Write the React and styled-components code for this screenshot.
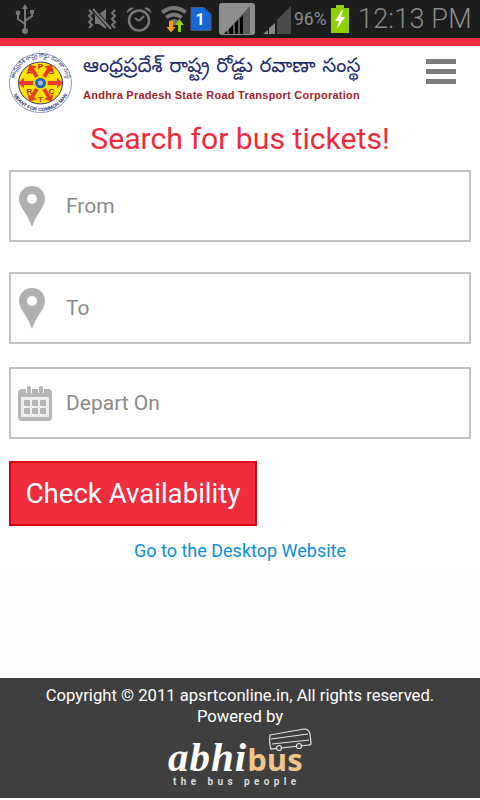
import * as React from 'react';
import styled, { createGlobalStyle } from 'styled-components';

const GlobalStyle = createGlobalStyle`
  html, body {
    margin: 0;
    padding: 0;
    background: #ffffff;
    font-family: Roboto, "Liberation Sans", sans-serif;
  }
  * { box-sizing: border-box; }
`;

// =====================================
// STATUS BAR
// =====================================

const Page = styled.div`
  width: 480px;
  height: 798px;
  display: flex;
  flex-direction: column;
  overflow: hidden;
`;

const StatusBar = styled.div`
  height: 38px;
  flex: none;
  background: #1d1d1d;
  display: flex;
  align-items: center;
  padding-left: 15px;
`;

const StatusIcon = styled.svg`
  flex: none;
  display: block;
  margin-left: ${(p) => p.$left || 0}px;
`;

const Percent = styled.span`
  margin-left: 3px;
  font-size: 17.5px;
  color: #8c8c8c;
  width: 37px;
`;

const Clock = styled.span`
  margin-left: 9px;
  font-size: 27px;
  font-weight: 300;
  color: #8c8c8c;
  white-space: nowrap;
  letter-spacing: 0.2px;
`;

const RedStripe = styled.div`
  height: 8px;
  flex: none;
  background: #ee2a3c;
`;

// =====================================
// HEADER
// =====================================

const Header = styled.header`
  height: 72px;
  flex: none;
  display: flex;
  align-items: flex-start;
  padding: 7px 24px 0 9px;
  background: #ffffff;
`;

const Brand = styled.div`
  flex: 1;
  display: flex;
  margin-left: 11px;
  flex-direction: column;
  padding-top: 2px;
`;

const TeluguName = styled.div`
  font-family: "Noto Sans Telugu", "Noto Sans", "DejaVu Sans", sans-serif;
  font-size: 20px;
  word-spacing: 1px;
  line-height: 28px;
  height: 33px;
  color: #1c2a6e;
  white-space: nowrap;
`;

const EnglishName = styled.div`
  font-family: "Liberation Sans", Arial, sans-serif;
  font-size: 11px;
  font-weight: 700;
  line-height: 14px;
  letter-spacing: 0.25px;
  color: #a3242c;
  white-space: nowrap;
`;

const Burger = styled.div`
  width: 30px;
  margin-top: 6px;
  display: flex;
  flex-direction: column;
  gap: 5px;
`;

const BurgerBar = styled.span`
  display: block;
  height: 5px;
  background: #7b7b7b;
`;

// =====================================
// FORM
// =====================================

const Main = styled.main`
  flex: 1;
  display: flex;
  flex-direction: column;
  padding: 0 9px;
  background: #ffffff;
`;

const Title = styled.h1`
  margin: 0;
  height: 52px;
  padding-top: 3px;
  font-size: 30.2px;
  line-height: 36px;
  font-weight: 400;
  text-align: center;
  white-space: nowrap;
  color: #f02a3d;
`;

const Field = styled.label`
  height: 72px;
  display: flex;
  align-items: center;
  border: 2px solid #c2c2c2;
  background: #ffffff;
  margin-bottom: ${(p) => p.$gap}px;
`;

const FieldIcon = styled.span`
  width: 55px;
  flex: none;
  display: flex;
  padding-left: ${(p) => p.$left}px;
`;

const FieldInput = styled.input`
  flex: 1;
  min-width: 0;
  border: 0;
  outline: 0;
  padding: 0;
  font-family: Roboto, sans-serif;
  font-size: 21px;
  background: transparent;
  &::placeholder { color: #8a8a8a; opacity: 1; }
`;

const SubmitButton = styled.button`
  width: 248px;
  height: 65px;
  border: 2px solid #dd0017;
  background: #f02c3d;
  color: #ffffff;
  font-family: Roboto, sans-serif;
  font-size: 27.6px;
  padding: 0;
  white-space: nowrap;
`;

const DesktopLink = styled.a`
  display: block;
  margin-top: 14px;
  font-size: 18px;
  line-height: 22px;
  text-align: center;
  color: #0b8fd8;
`;

const Spacer = styled.div`
  height: 103px;
  flex: none;
  background: #fffcfd;
`;

// =====================================
// FOOTER
// =====================================

const Footer = styled.footer`
  height: 120px;
  flex: none;
  background: #3f3f3f;
  color: #ffffff;
  display: flex;
  flex-direction: column;
  align-items: center;
  padding-top: 7px;
  font-size: 16.65px;
  line-height: 21px;
`;

const AbhiLogo = styled.div`
  position: relative;
  width: 144px;
  height: 60px;
  margin-top: 1px;
`;

const AbhiWord = styled.div`
  position: absolute;
  left: 0;
  top: 9px;
  font-family: "Liberation Serif", serif;
  font-style: italic;
  font-weight: 700;
  font-size: 41px;
  line-height: 40px;
  letter-spacing: 1px;
  white-space: nowrap;
`;

const BusPart = styled.span`
  font-family: "Open Sans", sans-serif;
  font-style: normal;
  font-weight: 700;
  color: #f3c48b;
  font-size: 31px;
  letter-spacing: 0;
`;

const Tagline = styled.div`
  position: absolute;
  left: 5px;
  bottom: 0;
  font-size: 10px;
  line-height: 12px;
  font-weight: 700;
  letter-spacing: 4.4px;
  color: #dcdcdc;
  white-space: nowrap;
`;

const BusDrawing = styled.svg`
  position: absolute;
  right: 0;
  top: 0;
`;

// ==========================================

const Pin = () => (
  <svg width="26" height="41" viewBox="0 0 26 41">
    <path
      fillRule="evenodd"
      fill="#afafaf"
      d="M13 0C5 0 0 6 0 13c0 8 9 15 13 28C17 28 26 21 26 13 26 6 21 0 13 0Zm0 8a5 5 0 1 1 0 10 5 5 0 0 1 0-10Z"
    />
  </svg>
);

const CalendarIcon = () => (
  <svg width="36" height="35" viewBox="0 0 36 35">
    <path fill="#b5b5b5" d="M5 3h4v4h6V3h6v4h6V3h4q4 0 4 4v24q0 4-4 4H5q-4 0-4-4V7q0-4 4-4Z" />
    <rect x="10" y="0" width="4" height="8" rx="2" fill="#b5b5b5" />
    <rect x="22" y="0" width="4" height="8" rx="2" fill="#b5b5b5" />
    <rect x="4" y="11" width="28" height="20" rx="1" fill="#eeeeee" />
    {[7, 15, 23].map((x) =>
      [14, 22].map((y) => <rect key={`${x}-${y}`} x={x} y={y} width="6" height="6" rx="1" fill="#b5b5b5" />)
    )}
  </svg>
);

const Emblem = () => {
  const arrows = [30, 90, 150, 210, 270, 330];
  const letters = [['A', 20.5, 22.5], ['P', 31.5, 16.5], ['S', 42.5, 22.5], ['R', 20.5, 43.5], ['T', 31.5, 51], ['C', 42.5, 43.5]];
  return (
    <svg width="63" height="60" viewBox="0 0 63 63" preserveAspectRatio="none">
      <defs>
        <path id="ringTop" d="M4.500 31.500a27 27 0 0 1 54 0" />
        <path id="ringBottom" d="M2 31.500a29.500 29.500 0 0 0 59 0" />
      </defs>
      <circle cx="31.5" cy="31.500" r="31" fill="#ffffff" />
      <circle cx="31.5" cy="31.500" r="31" fill="none" stroke="#6a74aa" strokeWidth="0.8" />
      <text fontFamily="Noto Sans Telugu, sans-serif" fontSize="5.500" fill="#27307d">
        <textPath href="#ringTop" startOffset="50%" textAnchor="middle">ఆంధ్రప్రదేశ్ రాష్ట్ర రోడ్డు రవాణా సంస్థ</textPath>
      </text>
      <text fontFamily="Liberation Sans" fontWeight="700" fontSize="5" fill="#27307d">
        <textPath href="#ringBottom" startOffset="50%" textAnchor="middle">MEANT FOR COMMON MAN</textPath>
      </text>
      <circle cx="31.5" cy="31.500" r="22" fill="#ffe100" stroke="#27307d" strokeWidth="1" />
      {arrows.map((a) => (
        <path key={a} d="M29.500 31.500V15H26l5.500-6 5.500 6h-3.500v16.500Z" fill="#ea3a24" transform={`rotate(${a} 31.5 31.5)`} />
      ))}
      <circle cx="31.5" cy="31.500" r="7.500" fill="#ffe100" />
      <circle cx="31.5" cy="31.500" r="5.500" fill="#2a64b4" />
      <circle cx="31.5" cy="31.500" r="2.500" fill="#9cc4e8" />
      {letters.map(([l, x, y]) => (
        <text key={l} x={x} y={y} fontFamily="Liberation Sans" fontWeight="700" fontSize="8" fill="#b42a2a" textAnchor="middle">{l}</text>
      ))}
    </svg>
  );
};

const App = () => {
  return (
    <Page>
      <GlobalStyle />
      <StatusBar>
        <StatusIcon width="20" height="31" viewBox="0 0 20 31">
          <g fill="none" stroke="#777777" strokeWidth="2">
            <path d="M10 4v22M3 11v4l7 5M17 9v3l-7 5" />
          </g>
          <path d="M10 0l3 5H7Z" fill="#777777" />
          <circle cx="3" cy="9" r="2.4" fill="#777777" />
          <rect x="15" y="6" width="4" height="4" fill="#777777" />
          <circle cx="10" cy="27" r="3" fill="#777777" />
        </StatusIcon>
        <StatusIcon $left={51} width="32" height="24" viewBox="0 0 32 24">
          <path d="M9 7h4l7-5v20l-7-5H9Z" fill="#777777" />
          <path d="M7 2l18 20" stroke="#1d1d1d" strokeWidth="4" />
          <path d="M7 2l18 20" stroke="#777777" strokeWidth="2" />
          <path d="M3 3l3 3-3 3 3 3-3 3 3 3-3 3M29 3l-3 3 3 3-3 3 3 3-3 3 3 3" fill="none" stroke="#777777" strokeWidth="2" />
        </StatusIcon>
        <StatusIcon $left={8} width="26" height="26" viewBox="0 0 26 26">
          <circle cx="13" cy="14.500" r="10" fill="none" stroke="#777777" strokeWidth="2.500" />
          <path d="M13 15l-4-3M13 15l5-5" fill="none" stroke="#777777" strokeWidth="2" />
          <path d="M1 7a5 5 0 0 1 7-5ZM25 7a5 5 0 0 0-7-5Z" fill="#777777" />
        </StatusIcon>
        <StatusIcon $left={9} width="26" height="28" viewBox="0 0 26 28">
          <path d="M0 6Q13-4 26 6l-2.500 3Q13 1 2.500 9ZM4 11q9-7 18 0l-2.500 3q-6.500-5-13 0ZM8 16q5-4 10 0l-5 5Z" fill="#777777" />
          <path d="M8 16h4v6h2.500L10 27.500 5.500 22H8Z" fill="#f2a024" />
          <path d="M17 27v-7h-3l4.500-6 4.500 6h-3v7Z" fill="#8fd100" />
        </StatusIcon>
        <StatusIcon $left={3} width="22" height="24" viewBox="0 0 22 24">
          <path d="M1 0.500h13l7 7v16H1Z" fill="#1668d6" stroke="#4c5a6e" />
          <text x="10" y="18" fontFamily="Roboto" fontWeight="700" fontSize="16" fill="#ffffff" textAnchor="middle">1</text>
        </StatusIcon>
        <StatusIcon $left={7} width="36" height="32" viewBox="0 0 36 32">
          <rect x="0" y="0" width="36" height="32" rx="3" fill="#8e8e8e" />
          <path d="M5 31 31 3v28Z" fill="#5a5a5a" />
          <path d="M5 31h3v-3ZM10 31h4v-9l-4 4ZM16 31h3V17l-3 3ZM21 31h3V12l-3 3Z" fill="#000000" />
        </StatusIcon>
        <StatusIcon $left={8} width="28" height="30" viewBox="0 0 28 30">
          <path d="M0 30l5-4v4ZM6 30v-6l6-5v11Z" fill="#888888" />
          <path d="M14 30V16l14-14v28Z" fill="#4b4b4b" />
        </StatusIcon>
        <Percent>96%</Percent>
        <StatusIcon width="18" height="28" viewBox="0 0 18 28">
          <path d="M5 0h8v3h5v25H0V3h5Z" fill="#8fd100" />
          <path d="M11 5 4 16h4l-2 8 8-12h-4l2-7Z" fill="#ffffff" />
        </StatusIcon>
        <Clock>12:13 PM</Clock>
      </StatusBar>
      <RedStripe />

      <Header>
        <Emblem />
        <Brand>
          <TeluguName>ఆంధ్రప్రదేశ్ రాష్ట్ర రోడ్డు రవాణా సంస్థ</TeluguName>
          <EnglishName>Andhra Pradesh State Road Transport Corporation</EnglishName>
        </Brand>
        <Burger>
          <BurgerBar />
          <BurgerBar />
          <BurgerBar />
        </Burger>
      </Header>

      <Main>
        <Title>Search for bus tickets!</Title>
        <Field $gap={30}>
          <FieldIcon $left={8}><Pin /></FieldIcon>
          <FieldInput placeholder="From" />
        </Field>
        <Field $gap={23}>
          <FieldIcon $left={8}><Pin /></FieldIcon>
          <FieldInput placeholder="To" />
        </Field>
        <Field $gap={22}>
          <FieldIcon $left={6}><CalendarIcon /></FieldIcon>
          <FieldInput placeholder="Depart On" />
        </Field>
        <SubmitButton>Check Availability</SubmitButton>
        <DesktopLink>Go to the Desktop Website</DesktopLink>
      </Main>

      <Spacer />

      <Footer>
        <div>Copyright © 2011 apsrtconline.in, All rights reserved.</div>
        <div>Powered by</div>
        <AbhiLogo>
          <BusDrawing width="44" height="24" viewBox="0 0 44 24">
            <g fill="none" stroke="#e4e4e4" strokeWidth="1.2">
              <path d="M2 7 36 1q5 0 6 5l1 9q0 2-2 2L3 21Q1 15 2 7Z" />
              <path d="M3 11 40 6M4 16 41 12" />
              <circle cx="11" cy="20" r="2.500" fill="#3f3f3f" />
              <circle cx="31" cy="18" r="2.500" fill="#3f3f3f" />
            </g>
          </BusDrawing>
          <AbhiWord>abhi<BusPart>bus</BusPart></AbhiWord>
          <Tagline>the bus people</Tagline>
        </AbhiLogo>
      </Footer>
    </Page>
  );
};

export default App;
